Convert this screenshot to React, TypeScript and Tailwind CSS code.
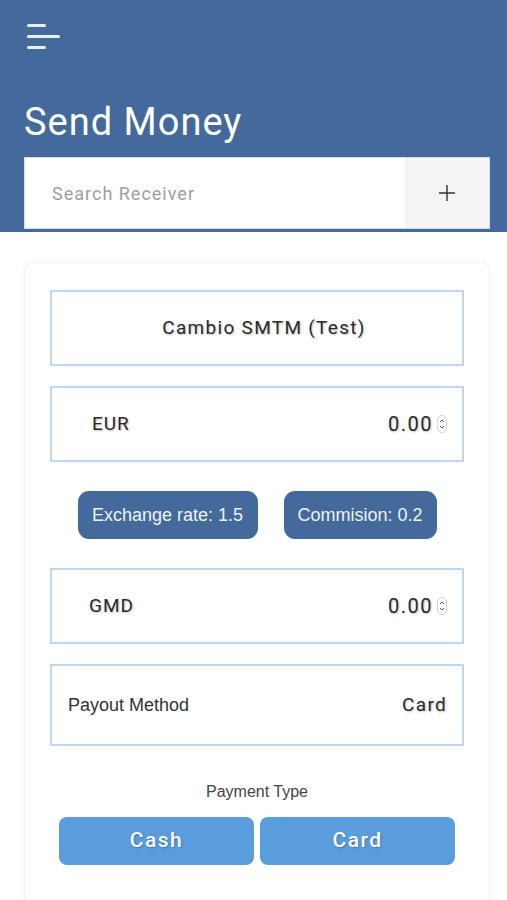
const roboto = "font-['Roboto',sans-serif]";
const helv = "font-['Liberation_Sans','Helvetica',sans-serif]";
const shadow = "[text-shadow:1px_1px_2px_rgba(0,0,0,0.25)]";

function Spinner() {
  return (
    <svg width="10" height="18" viewBox="0 0 10 18" className="ml-[4px]">
      <rect x="0.5" y="0.5" width="9" height="17" rx="4.5" fill="none" stroke="#d0d0d0" />
      <path d="M3 7 L5 5 L7 7" fill="none" stroke="#555" strokeWidth="1" />
      <path d="M3 11 L5 13 L7 11" fill="none" stroke="#555" strokeWidth="1" />
    </svg>
  );
}

function AmountField({ code, pl }: { code: string; pl: string }) {
  return (
    <div className={`flex h-[76px] items-center justify-between border-2 border-[#bdd6f3] ${pl} pr-[15px]`}>
      <span className={`${roboto} ${shadow} text-[19px] tracking-[1px] text-[#2b2b2b]`}>{code}</span>
      <div className="flex items-center">
        <span className={`${roboto} ${shadow} text-[20px] tracking-[1.5px] text-[#2b2b2b]`}>0.00</span>
        <Spinner />
      </div>
    </div>
  );
}

export default function App() {
  return (
    <div className="min-h-[900px] bg-white">
      <header className="bg-[#436a9b] pb-[3px] pl-[24px] pr-[17px] pt-[24px]">
        <div className="flex flex-col gap-[8px] pl-[3px]">
          <div className="h-[3px] w-[19px] rounded-full bg-[#e9eef5]" />
          <div className="h-[3px] w-[33px] rounded-full bg-[#e9eef5]" />
          <div className="h-[3px] w-[19px] rounded-full bg-[#e9eef5]" />
        </div>
        <h1 className={`${roboto} mt-[51px] text-[38px] leading-[44px] tracking-[1px] text-white`}>Send Money</h1>
        <div className="mt-[13px] flex h-[72px] border border-[#d5dde8] bg-white">
          <div className={`${roboto} flex flex-1 items-center pl-[27px] text-[18px] tracking-[1px] text-[#9e9e9e]`}>
            Search Receiver
          </div>
          <div className="flex w-[84px] items-center justify-center bg-[#f4f4f4]">
            <svg width="18" height="18" viewBox="0 0 18 18">
              <path d="M9 1 V17 M1 9 H17" stroke="#333" strokeWidth="1.4" />
            </svg>
          </div>
        </div>
      </header>

      <main className="ml-[24px] mr-[17px] mt-[30px] rounded-[10px] border border-[#f2f2f2] bg-white px-[25px] pt-[27px] pb-[60px] shadow-[0_0_6px_rgba(0,0,0,0.04)]">
        <div className="flex flex-col">
          <div className="flex h-[76px] items-center justify-center border-2 border-[#bdd6f3] pl-[14px]">
            <span className={`${roboto} ${shadow} text-[19px] tracking-[1.3px] text-[#2b2b2b]`}>Cambio SMTM (Test)</span>
          </div>

          <div className="mt-[20px]">
            <AmountField code="EUR" pl="pl-[40px]" />
          </div>

          <div className="mt-[29px] flex justify-center gap-[26px]">
            <div className={`${helv} flex h-[48px] w-[180px] items-center justify-center rounded-[11px] bg-[#436a9b] text-[18px] text-[#eef2f8]`}>
              Exchange rate: 1.5
            </div>
            <div className={`${helv} flex h-[48px] w-[153px] items-center justify-center rounded-[11px] bg-[#436a9b] text-[18px] text-[#eef2f8]`}>
              Commision: 0.2
            </div>
          </div>

          <div className="mt-[29px]">
            <AmountField code="GMD" pl="pl-[37px]" />
          </div>

          <div className="mt-[20px] flex h-[82px] items-center justify-between border-2 border-[#bdd6f3] pl-[16px] pr-[15px]">
            <span className={`${helv} text-[18px] text-[#333]`}>Payout Method</span>
            <span className={`${roboto} ${shadow} text-[19px] tracking-[1.3px] text-[#2b2b2b]`}>Card</span>
          </div>

          <p className={`${helv} mt-[34px] text-center text-[16px] text-[#444]`}>Payment Type</p>

          <div className="mt-[13px] flex gap-[6px] px-[9px]">
            <button className={`${roboto} ${shadow} h-[48px] flex-1 rounded-[8px] bg-[#5a9ddd] text-[21px] font-medium tracking-[1.5px] text-white`}>
              Cash
            </button>
            <button className={`${roboto} ${shadow} h-[48px] flex-1 rounded-[8px] bg-[#5a9ddd] text-[21px] font-medium tracking-[1.5px] text-white`}>
              Card
            </button>
          </div>
        </div>
      </main>
    </div>
  );
}
